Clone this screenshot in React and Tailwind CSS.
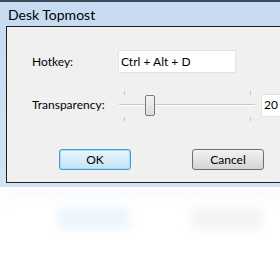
import React from 'react'

const App = () => {
  return (
    <div className="relative w-[280px] h-[269px] overflow-hidden bg-white" style={{ fontFamily: 'Lato, "Noto Sans", sans-serif' }}>
      {/* window */}
      <div className="w-[320px] border-t-2 border-[#3b4a5a] bg-gradient-to-b from-[#c6daf1] to-[#d3e3f5] pl-[6px] pb-[4px]">
        <div className="h-[24px] flex items-center pl-[2px] text-[14px] text-black">Desk Topmost</div>
        <div className="border border-[#1e1e1e] bg-[#f0f0f0] h-[157px] text-[12px] text-black">
          <div className="flex items-center pt-[23px] pl-[25px]">
            <span className="w-[86px]">Hotkey:</span>
            <div className="w-[118px] h-[23px] bg-white border border-[#e3e3e3] flex items-center pl-[2px]">Ctrl + Alt + D</div>
          </div>
          <div className="flex items-center pt-[16px] pl-[25px]">
            <span className="w-[87px]">Transparency:</span>
            <div className="relative w-[136px] h-[32px]">
              <div className="absolute left-[5px] top-[2px] w-px h-[4px] bg-[#c4c4c4]"></div>
              <div className="absolute left-[131px] top-[2px] w-px h-[4px] bg-[#c4c4c4]"></div>
              <div className="absolute left-[5px] top-[28px] w-px h-[4px] bg-[#c4c4c4]"></div>
              <div className="absolute left-[131px] top-[28px] w-px h-[4px] bg-[#c4c4c4]"></div>
              <div className="absolute left-0 right-0 top-[15px] h-[2px] bg-[#c8c8c8] border-b border-white"></div>
              <div className="absolute left-[26px] top-[6px] w-[10px] h-[21px] rounded-[2px] border border-[#7a7a7a] bg-gradient-to-b from-[#f4f4f4] to-[#dcdcdc]"></div>
            </div>
            <div className="ml-[6px] w-[40px] h-[23px] bg-white border border-[#e3e3e3] flex items-center pl-[2px]">20</div>
          </div>
          <div className="flex pt-[28px] pl-[52px]">
            <button className="w-[72px] h-[21px] rounded-[3px] border border-[#3c9fd6] bg-gradient-to-b from-[#eaf6fd] to-[#c4e2f4] shadow-[inset_0_0_0_1px_#a6dcf5]">OK</button>
            <button className="ml-[61px] w-[72px] h-[21px] rounded-[3px] border border-[#707070] bg-gradient-to-b from-[#f2f2f2] to-[#d5d5d5]">Cancel</button>
          </div>
        </div>
      </div>
      {/* blurred reflection */}
      <div className="blur-[4px] opacity-30 pl-[6px] pt-[2px]">
        <div className="h-[14px] bg-gradient-to-b from-[#d6e4f3] to-white"></div>
        <div className="flex pl-[52px] pt-[4px]">
          <div className="w-[72px] h-[22px] bg-[#c4e2f4]"></div>
          <div className="ml-[61px] w-[72px] h-[22px] bg-[#dcdcdc]"></div>
        </div>
      </div>
    </div>
  )
}

export default App
